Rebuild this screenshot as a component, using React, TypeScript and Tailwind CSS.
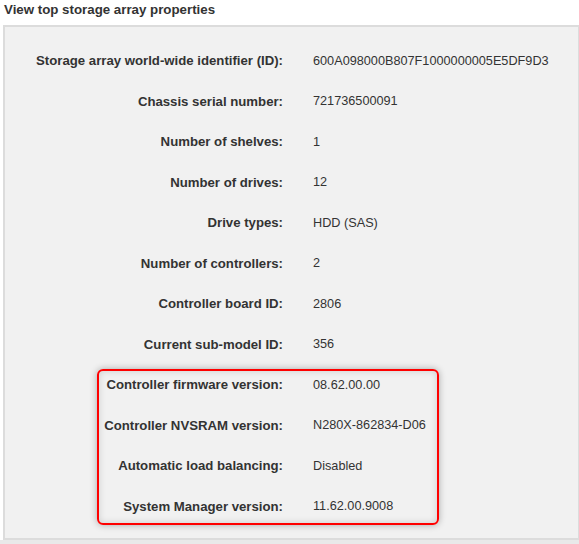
import React from "react";

const rows: [string, string][] = [
  ["Storage array world-wide identifier (ID):", "600A098000B807F1000000005E5DF9D3"],
  ["Chassis serial number:", "721736500091"],
  ["Number of shelves:", "1"],
  ["Number of drives:", "12"],
  ["Drive types:", "HDD (SAS)"],
  ["Number of controllers:", "2"],
  ["Controller board ID:", "2806"],
  ["Current sub-model ID:", "356"],
  ["Controller firmware version:", "08.62.00.00"],
  ["Controller NVSRAM version:", "N280X-862834-D06"],
  ["Automatic load balancing:", "Disabled"],
  ["System Manager version:", "11.62.00.9008"],
];

export default function App() {
  return (
    <div
      className="w-[579px] h-[544px] bg-white text-[13px] text-[#333] overflow-hidden"
      style={{ fontFamily: '"Liberation Sans", Arial, sans-serif' }}
    >
      <div className="h-[25px] pl-[4px] pt-[2px] font-bold text-[13.3px] leading-[16px]">
        View top storage array properties
      </div>
      <div className="relative ml-[3px] h-[515px] border-l-2 border-t-2 border-r border-b-2 border-[#dcdcdc] bg-[#f1f1f1] pt-[14px]">
        <div className="grid grid-cols-[278px_1fr] gap-x-[30px]">
          {rows.map(([label, value]) => (
            <React.Fragment key={label}>
              <div className="h-[40.5px] flex items-center justify-end font-bold text-[13.2px] whitespace-nowrap">
                {label}
              </div>
              <div className="h-[40.5px] flex items-center text-[12.7px] whitespace-nowrap">{value}</div>
            </React.Fragment>
          ))}
        </div>
        <div className="absolute left-[92px] top-[342px] w-[342px] h-[156px] rounded-[6px] border-2 border-[#ff0000] shadow-[0_0_7px_rgba(0,0,0,0.3),inset_0_0_7px_rgba(0,0,0,0.15)]" />
      </div>
      <div className="h-[4px] bg-[#e9e9e9]" />
    </div>
  );
}
